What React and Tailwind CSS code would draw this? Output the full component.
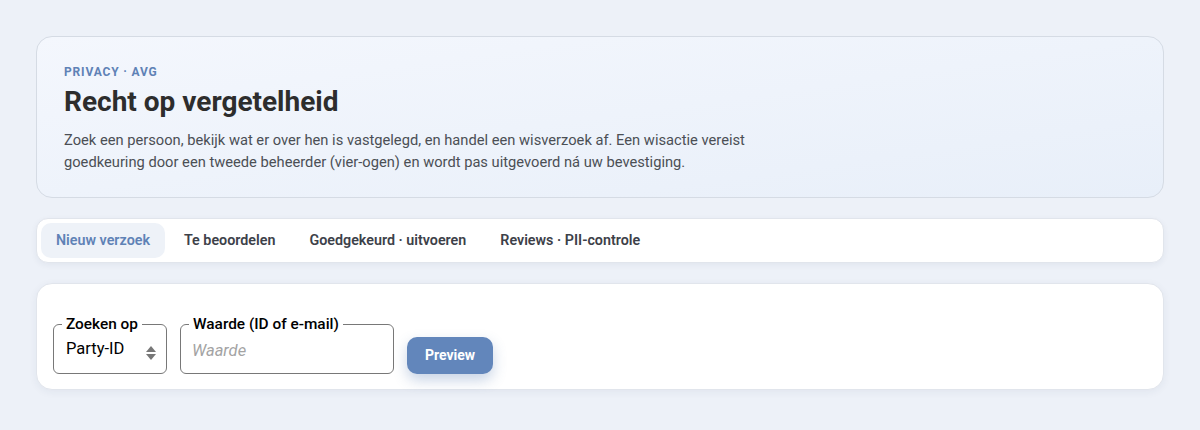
import React, { useState } from 'react';

const tabs = ['Nieuw verzoek', 'Te beoordelen', 'Goedgekeurd · uitvoeren', 'Reviews · PII-controle'];

export default function App() {
  const [active, setActive] = useState(0);
  const [mode, setMode] = useState('party');
  const [value, setValue] = useState('');

  return (
    <div className="min-h-[430px] bg-[#edf1f8] px-9 pt-9 pb-10 font-['Roboto',sans-serif] text-[#2b2b2b]">
      {/* Header */}
      <div className="rounded-[16px] border border-[#d5dbe4] bg-gradient-to-br from-[#f4f7fd] to-[#e8eff9] px-[27px] pt-[26px] pb-[24px]">
        <div className="text-[12px] font-bold uppercase tracking-[0.07em] text-[#5f82b6]">Privacy · AVG</div>
        <h1 className="mt-[3px] text-[28px] font-bold leading-[36px] text-[#2d2d2d]">Recht op vergetelheid</h1>
        <p className="mt-[9px] max-w-[720px] text-[14.7px] leading-[22px] text-[#4b4f55]">
          Zoek een persoon, bekijk wat er over hen is vastgelegd, en handel een wisverzoek af. Een wisactie vereist
          goedkeuring door een tweede beheerder (vier-ogen) en wordt pas uitgevoerd ná uw bevestiging.
        </p>
      </div>

      {/* Tabs */}
      <div className="mt-5 flex gap-1 rounded-[12px] border border-[#e1e5ec] bg-white p-1 shadow-[0_2px_6px_rgba(30,50,90,0.06)]">
        {tabs.map((t, i) => (
          <button
            key={t}
            onClick={() => setActive(i)}
            className={`h-[35px] rounded-[10px] px-[15px] text-[14.3px] font-semibold ${
              active === i ? 'bg-[#eef2f8] text-[#5f82b6]' : 'text-[#3d4149]'
            }`}
          >
            {t}
          </button>
        ))}
      </div>

      {/* Form */}
      <div className="mt-5 flex items-end gap-[13px] rounded-[16px] border border-[#e1e5ec] bg-white px-4 pt-[33px] pb-[15px] shadow-[0_2px_8px_rgba(30,50,90,0.06)]">
        <fieldset className="relative h-[57px] w-[114px] rounded-[6px] border border-[#787878] px-[8px]">
          <legend className="px-[4px] text-[15.4px] font-medium leading-[14px] text-black">Zoeken op</legend>
          <select
            value={mode}
            onChange={(e) => setMode(e.target.value)}
            className="h-[37px] w-full appearance-none bg-transparent pl-[4px] pr-6 text-[16.5px] text-black outline-none"
          >
            <option value="party">Party-ID</option>
            <option value="email">E-mail</option>
          </select>
          <svg className="pointer-events-none absolute right-[10px] top-[15px]" width="10" height="14" viewBox="0 0 10 14">
            <path d="M5 0 L10 6 L0 6 Z" fill="#777" />
            <path d="M5 14 L10 8 L0 8 Z" fill="#777" />
          </svg>
        </fieldset>

        <fieldset className="h-[57px] w-[214px] rounded-[6px] border border-[#787878] px-[8px]">
          <legend className="px-[4px] text-[15.4px] font-medium leading-[14px] text-black">Waarde (ID of e-mail)</legend>
          <input
            value={value}
            onChange={(e) => setValue(e.target.value)}
            placeholder="Waarde"
            className="h-[38px] w-full bg-transparent pl-[3px] text-[16.5px] text-black italic outline-none placeholder:italic placeholder:text-[#a3a3a3]"
          />
        </fieldset>

        <button className="h-[37px] rounded-[10px] bg-[#6286bb] px-[18px] text-[14px] font-bold text-white shadow-[0_6px_14px_rgba(70,110,170,0.3)]">
          Preview
        </button>
      </div>
    </div>
  );
}
